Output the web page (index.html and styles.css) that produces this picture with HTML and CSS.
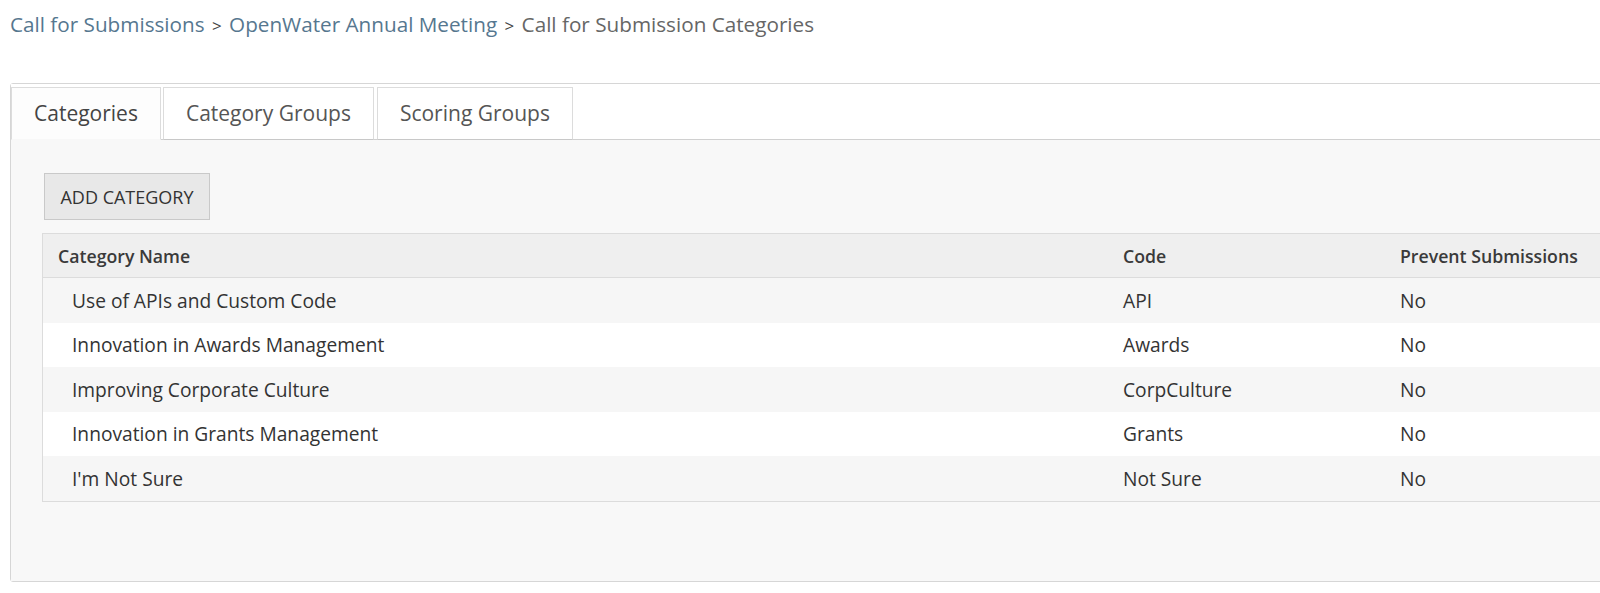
FILE: index.html
```html
<!DOCTYPE html>
<html lang="en">
<head>
    <meta charset="UTF-8">
    <meta name="viewport" content="width=device-width, initial-scale=1.0">
    <title>Call for Submission Categories</title>
    <link rel="stylesheet" href="styles.css">
</head>
<body>
<div class="breadcrumb">
    <a href="#">Call for Submissions</a>
    <span class="sep">&gt;</span>
    <a href="#">OpenWater Annual Meeting</a>
    <span class="sep">&gt;</span>
    <span class="current">Call for Submission Categories</span>
</div>

<div class="panel">
    <ul class="tabs">
        <li class="tab active">Categories</li>
        <li class="tab">Category Groups</li>
        <li class="tab">Scoring Groups</li>
    </ul>
    <div class="tab-content">
        <button type="button" class="btn">ADD CATEGORY</button>
        <table class="grid">
            <thead>
                <tr>
                    <th class="col-name">Category Name</th>
                    <th class="col-code">Code</th>
                    <th class="col-prevent">Prevent Submissions</th>
                </tr>
            </thead>
            <tbody>
                <tr><td class="name">Use of APIs and Custom Code</td><td>API</td><td>No</td></tr>
                <tr><td class="name">Innovation in Awards Management</td><td>Awards</td><td>No</td></tr>
                <tr><td class="name">Improving Corporate Culture</td><td>CorpCulture</td><td>No</td></tr>
                <tr><td class="name">Innovation in Grants Management</td><td>Grants</td><td>No</td></tr>
                <tr><td class="name">I'm Not Sure</td><td>Not Sure</td><td>No</td></tr>
            </tbody>
        </table>
    </div>
</div>
</body>
</html>
```

FILE: styles.css
```css
body {
    font-family: "Open Sans", Arial, sans-serif;
    margin: 0;
    background-color: white;
    color: #333;
    overflow: hidden;
}
.breadcrumb {
    padding: 10px 0 0 10px;
    font-size: 20.7px;
    line-height: 28px;
    color: #666;
}
.breadcrumb a {
    color: #56778f;
    text-decoration: none;
}
.breadcrumb .sep {
    color: #444;
    font-size: 17px;
    margin: 0 2px;
}
.panel {
    margin: 43px 0 0 10px;
    width: 1620px;
    height: 497px;
    border: 1px solid #d6d6d6;
    border-radius: 3px;
    display: flex;
    flex-direction: column;
}
.tabs {
    list-style: none;
    margin: 0;
    padding: 3px 0 0 0;
    display: flex;
    border-bottom: 1px solid #d0d0d0;
    background-color: white;
}
.tab {
    height: 51px;
    line-height: 51px;
    padding: 0 22px;
    margin-right: 3px;
    margin-bottom: -1px;
    font-size: 21px;
    color: #555;
    background-color: white;
    border: 1px solid #dcdcdc;
    border-bottom-color: #c8c8c8;
}
.tab.active {
    margin-right: 2px;
    border-bottom-color: #f8f8f8;
    background-color: #fdfdfd;
    color: #444;
}
.tab-content {
    flex: 1;
    background-color: #f8f8f8;
    padding: 33px 0 0 31px;
}
.btn {
    font-family: inherit;
    font-size: 18px;
    color: #333;
    background-color: #e8e8e8;
    border: 1px solid #c9c9c9;
    width: 166px;
    height: 47px;
    margin-left: 2px;
    padding: 0;
    cursor: pointer;
}
.grid {
    margin-top: 13px;
    border-collapse: collapse;
    border: 1px solid #dcdcdc;
    width: 1600px;
    font-size: 19.2px;
}
.grid th {
    text-align: left;
    font-weight: 600;
    font-size: 17.7px;
    height: 43px;
    color: #3a3a3a;
    background-color: #efefef;
    border-bottom: 1px solid #dcdcdc;
    padding: 0 0 0 15px;
}
.grid td {
    height: 44.5px;
    padding: 0 0 0 15px;
    color: #333;
}
.grid td.name {
    padding-left: 29px;
}
.grid tbody tr:nth-child(odd) {
    background-color: #f6f6f6;
}
.grid tbody tr:nth-child(even) {
    background-color: white;
}
.col-name {
    width: 1050px;
}
.col-code {
    width: 262px;
}
```
